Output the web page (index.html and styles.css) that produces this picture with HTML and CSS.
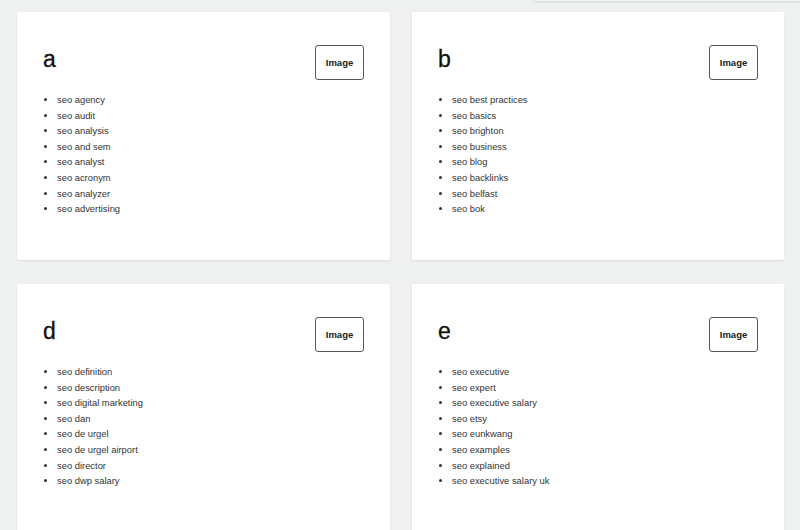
FILE: index.html
```html
<!DOCTYPE html>
<html>
<head>
<meta charset="utf-8">
<link rel="stylesheet" href="styles.css">
</head>
<body>
<div class="topbar"></div>
<main class="grid">
  <section class="card">
    <div class="card-head"><h2 class="letter">a</h2><button class="img-btn">Image</button></div>
    <ul class="terms">
      <li>seo agency</li><li>seo audit</li><li>seo analysis</li><li>seo and sem</li>
      <li>seo analyst</li><li>seo acronym</li><li>seo analyzer</li><li>seo advertising</li>
    </ul>
  </section>
  <section class="card">
    <div class="card-head"><h2 class="letter">b</h2><button class="img-btn">Image</button></div>
    <ul class="terms">
      <li>seo best practices</li><li>seo basics</li><li>seo brighton</li><li>seo business</li>
      <li>seo blog</li><li>seo backlinks</li><li>seo belfast</li><li>seo bok</li>
    </ul>
  </section>
  <section class="card">
    <div class="card-head"><h2 class="letter">d</h2><button class="img-btn">Image</button></div>
    <ul class="terms">
      <li>seo definition</li><li>seo description</li><li>seo digital marketing</li><li>seo dan</li>
      <li>seo de urgel</li><li>seo de urgel airport</li><li>seo director</li><li>seo dwp salary</li>
    </ul>
  </section>
  <section class="card">
    <div class="card-head"><h2 class="letter">e</h2><button class="img-btn">Image</button></div>
    <ul class="terms">
      <li>seo executive</li><li>seo expert</li><li>seo executive salary</li><li>seo etsy</li>
      <li>seo eunkwang</li><li>seo examples</li><li>seo explained</li><li>seo executive salary uk</li>
    </ul>
  </section>
</main>
</body>
</html>
```
FILE: styles.css
```css
html, body {
  margin: 0;
  padding: 0;
  background: #eff0f0;
  font-family: "Liberation Sans", Arial, sans-serif;
  overflow: hidden;
}

.topbar {
  position: absolute;
  top: -20px;
  left: 534px;
  right: 0;
  height: 21px;
  background: #f4f5f5;
  box-shadow: 0 1px 2px rgba(0, 0, 0, 0.12);
}

.grid {
  display: grid;
  grid-template-columns: 373px 372px;
  column-gap: 22px;
  row-gap: 24px;
  padding: 12px 0 0 17px;
}

.card {
  background: #fff;
  height: 248px;
  box-sizing: border-box;
  padding: 33px 26px 0 26px;
  border-radius: 2px;
  box-shadow: 0 1px 2px rgba(0, 0, 0, 0.08);
}

.card-head {
  display: flex;
  justify-content: space-between;
  align-items: flex-start;
}

.letter {
  margin: 2px 0 0 0;
  font-size: 23px;
  line-height: 24px;
  font-weight: 400;
  color: #111;
  -webkit-text-stroke: 0.3px #111;
}

.img-btn {
  width: 49px;
  height: 35px;
  padding: 0;
  border: 1px solid #555;
  border-radius: 3px;
  background: #fff;
  font-family: "Liberation Sans", Arial, sans-serif;
  font-size: 9.5px;
  font-weight: 700;
  color: #222;
}

.terms {
  margin: 12px 0 0 0;
  padding-left: 14px;
  font-size: 9.4px;
  line-height: 15.6px;
  color: #333;
}
```
